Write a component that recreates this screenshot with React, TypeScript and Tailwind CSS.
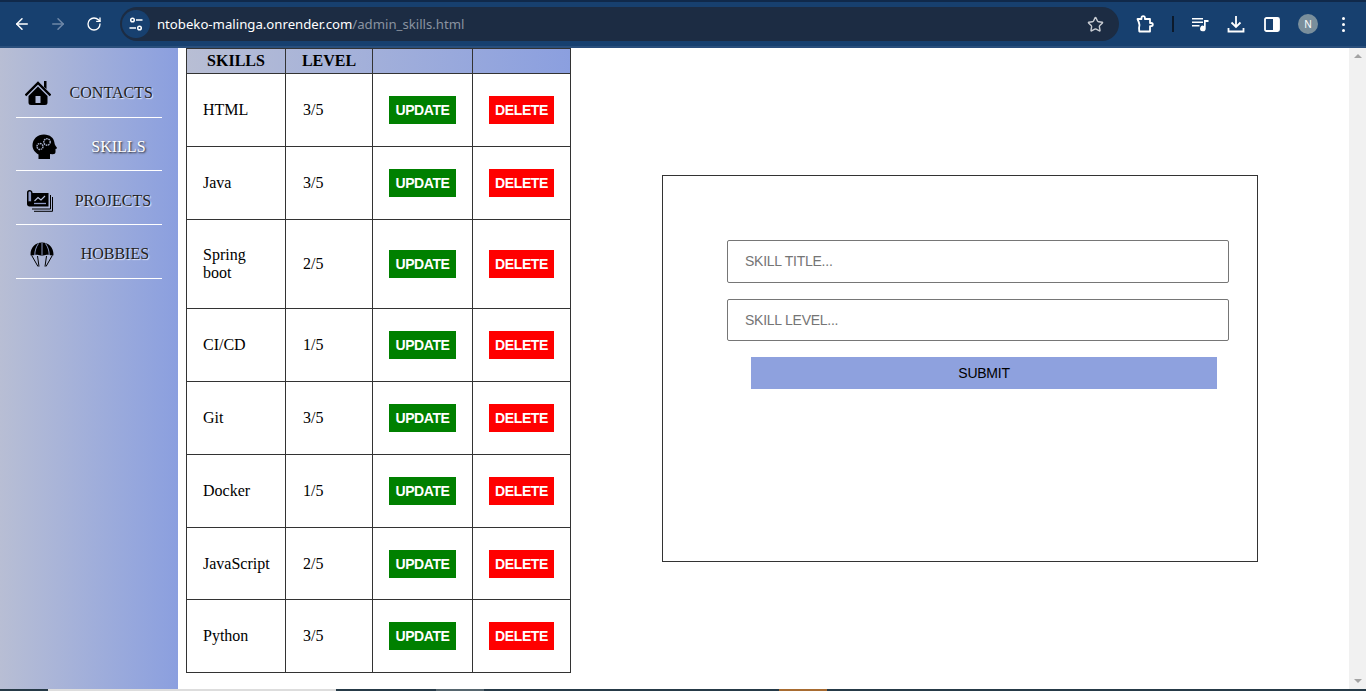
import { ArrowLeft, ArrowRight, RotateCw, Star } from 'lucide-react';

const skills = [
  { name: 'HTML', level: '3/5', row: 'h-[73px]' },
  { name: 'Java', level: '3/5', row: 'h-[73px]' },
  { name: 'Spring boot', level: '2/5', row: 'h-[89px]' },
  { name: 'CI/CD', level: '1/5', row: 'h-[73px]' },
  { name: 'Git', level: '3/5', row: 'h-[73px]' },
  { name: 'Docker', level: '1/5', row: 'h-[73px]' },
  { name: 'JavaScript', level: '2/5', row: 'h-[72px]' },
  { name: 'Python', level: '3/5', row: 'h-[73px]' },
];

function HouseIcon() {
  return (
    <svg width="26" height="24" viewBox="0 0 26 24">
      <path d="M19 0h2.500v8L19 6z" fill="#000" />
      <path d="M0.500 14.500L13 2l12.500 12.500" fill="none" stroke="#000" strokeWidth="2.400" />
      <path
        fillRule="evenodd"
        d="M13 5.500l9.500 9.500v6.500q0 2.500-2.500 2.500H6q-2.500 0-2.500-2.500V15zM10.500 15v7h5v-7z"
        fill="#000"
      />
    </svg>
  );
}

function HeadIcon() {
  return (
    <svg width="26" height="25" viewBox="0 0 26 25">
      <path
        d="M12 0.500c6 0 10 3.500 10.500 8.500 0 1 .3 1.700 1 2.700l1.300 1.800c.4.700 0 1.200-1.300 1.500v3c0 1.600-1.200 2.300-3 2.200l-2.500-.2V25H6.500v-4.500C3 18.500.5 15.500.5 11.500.5 5 5.500.500 12 .500z"
        fill="#000"
      />
      <circle cx="15" cy="8" r="3.200" fill="none" stroke="#aab3d0" strokeWidth="1.400" strokeDasharray="1.600 .7" />
      <circle cx="8" cy="12.500" r="3" fill="none" stroke="#aab3d0" strokeWidth="1.400" strokeDasharray="1.600 .7" />
    </svg>
  );
}

function ProjectsIcon() {
  return (
    <svg width="26" height="22" viewBox="0 0 26 22">
      <path d="M7 21.300h18.500V7" fill="none" stroke="#000" strokeWidth="1" />
      <path d="M5 19h18.500V5" fill="none" stroke="#000" strokeWidth="1" />
      <path
        fillRule="evenodd"
        d="M2.500 0C1 0 0 1 0 2.500V14c0 1.500 1 2.500 2.500 2.500h19V3H5.500V2.500C5.500 1 4 0 2.500 0z"
        fill="#000"
      />
      <path d="M2.700 1.500C1.900 1.500 1.500 2 1.500 2.700v8.800c.6-.5 1.800-.5 2.600 0V2.700c0-.7-.6-1.200-1.400-1.200z" fill="#8f9bc6" />
      <path d="M7.500 11l3.500-3.500 3 2.500 4-4" fill="none" stroke="#b9c2de" strokeWidth="1.100" />
      <path d="M7 13.500h12" stroke="#8f9bc6" strokeWidth="1.300" />
    </svg>
  );
}

function ParachuteIcon() {
  return (
    <svg width="26" height="25" viewBox="0 0 26 25">
      <path
        d="M13 0.500C6 .5 1.500 5.500 1.500 12.500c0 .6.200 1 .6 1.300l3.400-.8c1.300-.5 2.700-.5 4 0l3.500.8 3.500-.8c1.300-.5 2.700-.5 4 0l3.400.8c.4-.3.6-.7.600-1.300C24.500 5.500 20 .5 13 .5z"
        fill="#000"
      />
      <path
        d="M9.500 1.500C7 5 5.800 9 5.800 13M16.500 1.500C19 5 20.200 9 20.200 13M13 1v12.500"
        fill="none"
        stroke="#9aa8d8"
        strokeWidth="0.900"
      />
      <path
        d="M3 14l6 10.500M8.500 14l1.500 10.500M17.500 14L16 24.500M23 14l-6 10.500"
        fill="none"
        stroke="#000"
        strokeWidth="1"
      />
    </svg>
  );
}

const links = [
  { label: 'CONTACTS', icon: <HouseIcon />, active: false },
  { label: 'SKILLS', icon: <HeadIcon />, active: true },
  { label: 'PROJECTS', icon: <ProjectsIcon />, active: false },
  { label: 'HOBBIES', icon: <ParachuteIcon />, active: false },
];

function TuneIcon() {
  return (
    <svg width="16" height="16" viewBox="0 0 16 16" fill="none" stroke="#fff" strokeWidth="1.500">
      <circle cx="4.500" cy="4" r="1.800" />
      <path d="M8 4h6.500M1.500 12H8" />
      <circle cx="11.500" cy="12" r="1.800" />
    </svg>
  );
}

function ExtensionIcon() {
  return (
    <svg width="18" height="18" viewBox="0 0 18 18" fill="none" stroke="#fff" strokeWidth="1.800" strokeLinejoin="round">
      <path d="M1.500 4h4V2.800a1.700 1.700 0 0 1 3.400 0V4h5.100v4h1.200a1.600 1.600 0 0 1 0 3.200H14V16.500H3.300Q2.800 12 3.500 10 3 7 1.500 4z" />
    </svg>
  );
}

function QueueIcon() {
  return (
    <svg width="18" height="16" viewBox="0 0 18 16" fill="#fff">
      <path d="M1 2h11v1.600H1zM1 5.500h11v1.600H1zM1 9h7.500v1.600H1z" />
      <path d="M13 4h4.500v2h-2.800v6.500a2.800 2.800 0 1 1-1.700-2.600z" />
    </svg>
  );
}

function DownloadIcon() {
  return (
    <svg width="18" height="18" viewBox="0 0 18 18" fill="none" stroke="#fff" strokeWidth="1.800">
      <path d="M9 1v10.500M4.500 7.500L9 12l4.500-4.500M1.500 13v3.500h15V13" />
    </svg>
  );
}

function PanelIcon() {
  return (
    <svg width="16" height="15" viewBox="0 0 16 15">
      <rect x="1" y="1" width="14" height="13" rx="1.500" fill="none" stroke="#fff" strokeWidth="1.800" />
      <rect x="9" y="1" width="6" height="13" fill="#fff" />
    </svg>
  );
}

function BrowserBar() {
  return (
    <div className="shrink-0 bg-[#17406f] border-b-2 border-[#2a4f7c]">
      <div className="h-[2px] bg-[#10294a]" />
      <div className="h-[44px] flex items-center pl-1 pr-1">
        <div className="w-9 flex justify-center text-white">
          <ArrowLeft size={18} strokeWidth={2} />
        </div>
        <div className="w-9 flex justify-center text-[#6f88a8]">
          <ArrowRight size={18} strokeWidth={2} />
        </div>
        <div className="w-9 flex justify-center text-white">
          <RotateCw size={16} strokeWidth={2} />
        </div>
        <div className="ml-2 w-[1000px] h-[34px] rounded-full bg-[#1c2c43] flex items-center pl-[2px] pr-[15px]">
          <div className="w-[28px] h-[28px] rounded-full bg-[#17406f] flex items-center justify-center">
            <TuneIcon />
          </div>
          <div className="ml-[7px] flex-1 font-['Noto_Sans',sans-serif] text-[13.200px] text-white">
            ntobeko-malinga.onrender.com<span className="text-[#8a93a0]">/admin_skills.html</span>
          </div>
          <Star size={17} strokeWidth={2} className="text-[#c8ccd2]" />
        </div>
        <div className="ml-2 w-9 flex justify-center">
          <ExtensionIcon />
        </div>
        <div className="w-[19px] flex justify-center">
          <div className="w-[2px] h-4 bg-[#0c1a2c]" />
        </div>
        <div className="w-9 flex justify-center">
          <QueueIcon />
        </div>
        <div className="w-9 flex justify-center">
          <DownloadIcon />
        </div>
        <div className="w-9 flex justify-center">
          <PanelIcon />
        </div>
        <div className="w-9 flex justify-center">
          <div className="w-5 h-5 rounded-full bg-[#7a8f9c] text-white text-[10px] flex items-center justify-center font-['Noto_Sans',sans-serif]">
            N
          </div>
        </div>
        <div className="w-9 flex flex-col items-center gap-[3px]">
          <div className="w-[3px] h-[3px] rounded-full bg-white" />
          <div className="w-[3px] h-[3px] rounded-full bg-white" />
          <div className="w-[3px] h-[3px] rounded-full bg-white" />
        </div>
      </div>
    </div>
  );
}

function Sidebar() {
  return (
    <div className="w-[178px] shrink-0 bg-gradient-to-r from-[#b8bed4] to-[#8b9fdf] pt-[16px] pl-[16px]">
      {links.map((l) => (
        <div
          key={l.label}
          className="w-[146px] h-[53.670px] pt-[6px] flex items-center justify-around border-b border-white"
        >
          <div className="w-[26px] flex justify-center">{l.icon}</div>
          <span
            className={
              l.active
                ? 'text-white [text-shadow:1px_1px_2px_#222]'
                : 'text-[#222] [text-shadow:1px_1px_1px_#e8ecff]'
            }
          >
            {l.label}
          </span>
        </div>
      ))}
    </div>
  );
}

function SkillsTable() {
  return (
    <table className="ml-[8px] h-fit w-[384px] table-fixed border-collapse self-start">
      <colgroup>
        <col className="w-[99px]" />
        <col className="w-[87px]" />
        <col className="w-[100px]" />
        <col className="w-[98px]" />
      </colgroup>
      <thead>
        <tr className="h-[25px] bg-gradient-to-r from-[#b8bed4] to-[#8b9fdf]">
          <th className="border border-[#333] p-0 font-bold">SKILLS</th>
          <th className="border border-[#333] p-0 font-bold">LEVEL</th>
          <th className="border border-[#333] p-0" />
          <th className="border border-[#333] p-0" />
        </tr>
      </thead>
      <tbody>
        {skills.map((s) => (
          <tr key={s.name} className={s.row}>
            <td className="border border-[#333] px-4 py-0">{s.name}</td>
            <td className="border border-[#333] pl-[17px] pr-4 py-0">{s.level}</td>
            <td className="border border-[#333] px-4 py-0">
              <button className="h-[28px] w-[67px] bg-[#008000] text-white text-[14px] tracking-[-0.4px] font-bold font-['Liberation_Sans',sans-serif]">
                UPDATE
              </button>
            </td>
            <td className="border border-[#333] px-4 py-0">
              <button className="h-[28px] w-[65px] bg-[#ff0000] text-white text-[14px] tracking-[-0.4px] font-bold font-['Liberation_Sans',sans-serif]">
                DELETE
              </button>
            </td>
          </tr>
        ))}
      </tbody>
    </table>
  );
}

function SkillForm() {
  return (
    <div className="ml-[91px] mt-[127px] w-[596px] h-[387px] border border-[#333] pt-[64px] pl-[64px] font-['Liberation_Sans',sans-serif] text-[14px] tracking-[-0.25px]">
      <input
        placeholder="SKILL TITLE..."
        className="block w-[502px] h-[43px] border border-[#767676] rounded-[2px] pl-[17px] pr-4 pb-[1px] placeholder:text-[#757575] outline-none"
      />
      <input
        placeholder="SKILL LEVEL..."
        className="block mt-4 w-[502px] h-[42px] border border-[#767676] rounded-[2px] pl-[17px] pr-4 placeholder:text-[#757575] outline-none"
      />
      <button className="block mt-4 ml-6 w-[466px] h-[32px] bg-[#8ea1de] text-black">SUBMIT</button>
    </div>
  );
}

function Scrollbar() {
  return (
    <div className="w-[17px] shrink-0 bg-[#f1f1f1] flex flex-col justify-between items-center py-[6px]">
      <div className="w-0 h-0 border-x-[4px] border-x-transparent border-b-[4px] border-b-[#a3a3a3]" />
      <div className="w-0 h-0 border-x-[4px] border-x-transparent border-t-[4px] border-t-[#a3a3a3]" />
    </div>
  );
}

function Taskbar() {
  return (
    <div className="h-[2px] shrink-0 flex bg-[#263a47]">
      <div className="ml-[48px] w-[288px] bg-[#dddddd]" />
      <div className="ml-[100px] w-[48px] bg-[#56666f]" />
      <div className="ml-[295px] w-[48px] bg-[#a86c32]" />
    </div>
  );
}

export default function App() {
  return (
    <div className="h-[691px] w-[1366px] flex flex-col overflow-hidden bg-white text-black font-['Liberation_Serif',serif] text-base leading-[18px]">
      <BrowserBar />
      <div className="flex-1 flex min-h-0">
        <Sidebar />
        <div className="flex-1 flex items-start">
          <SkillsTable />
          <SkillForm />
        </div>
        <Scrollbar />
      </div>
      <Taskbar />
    </div>
  );
}
